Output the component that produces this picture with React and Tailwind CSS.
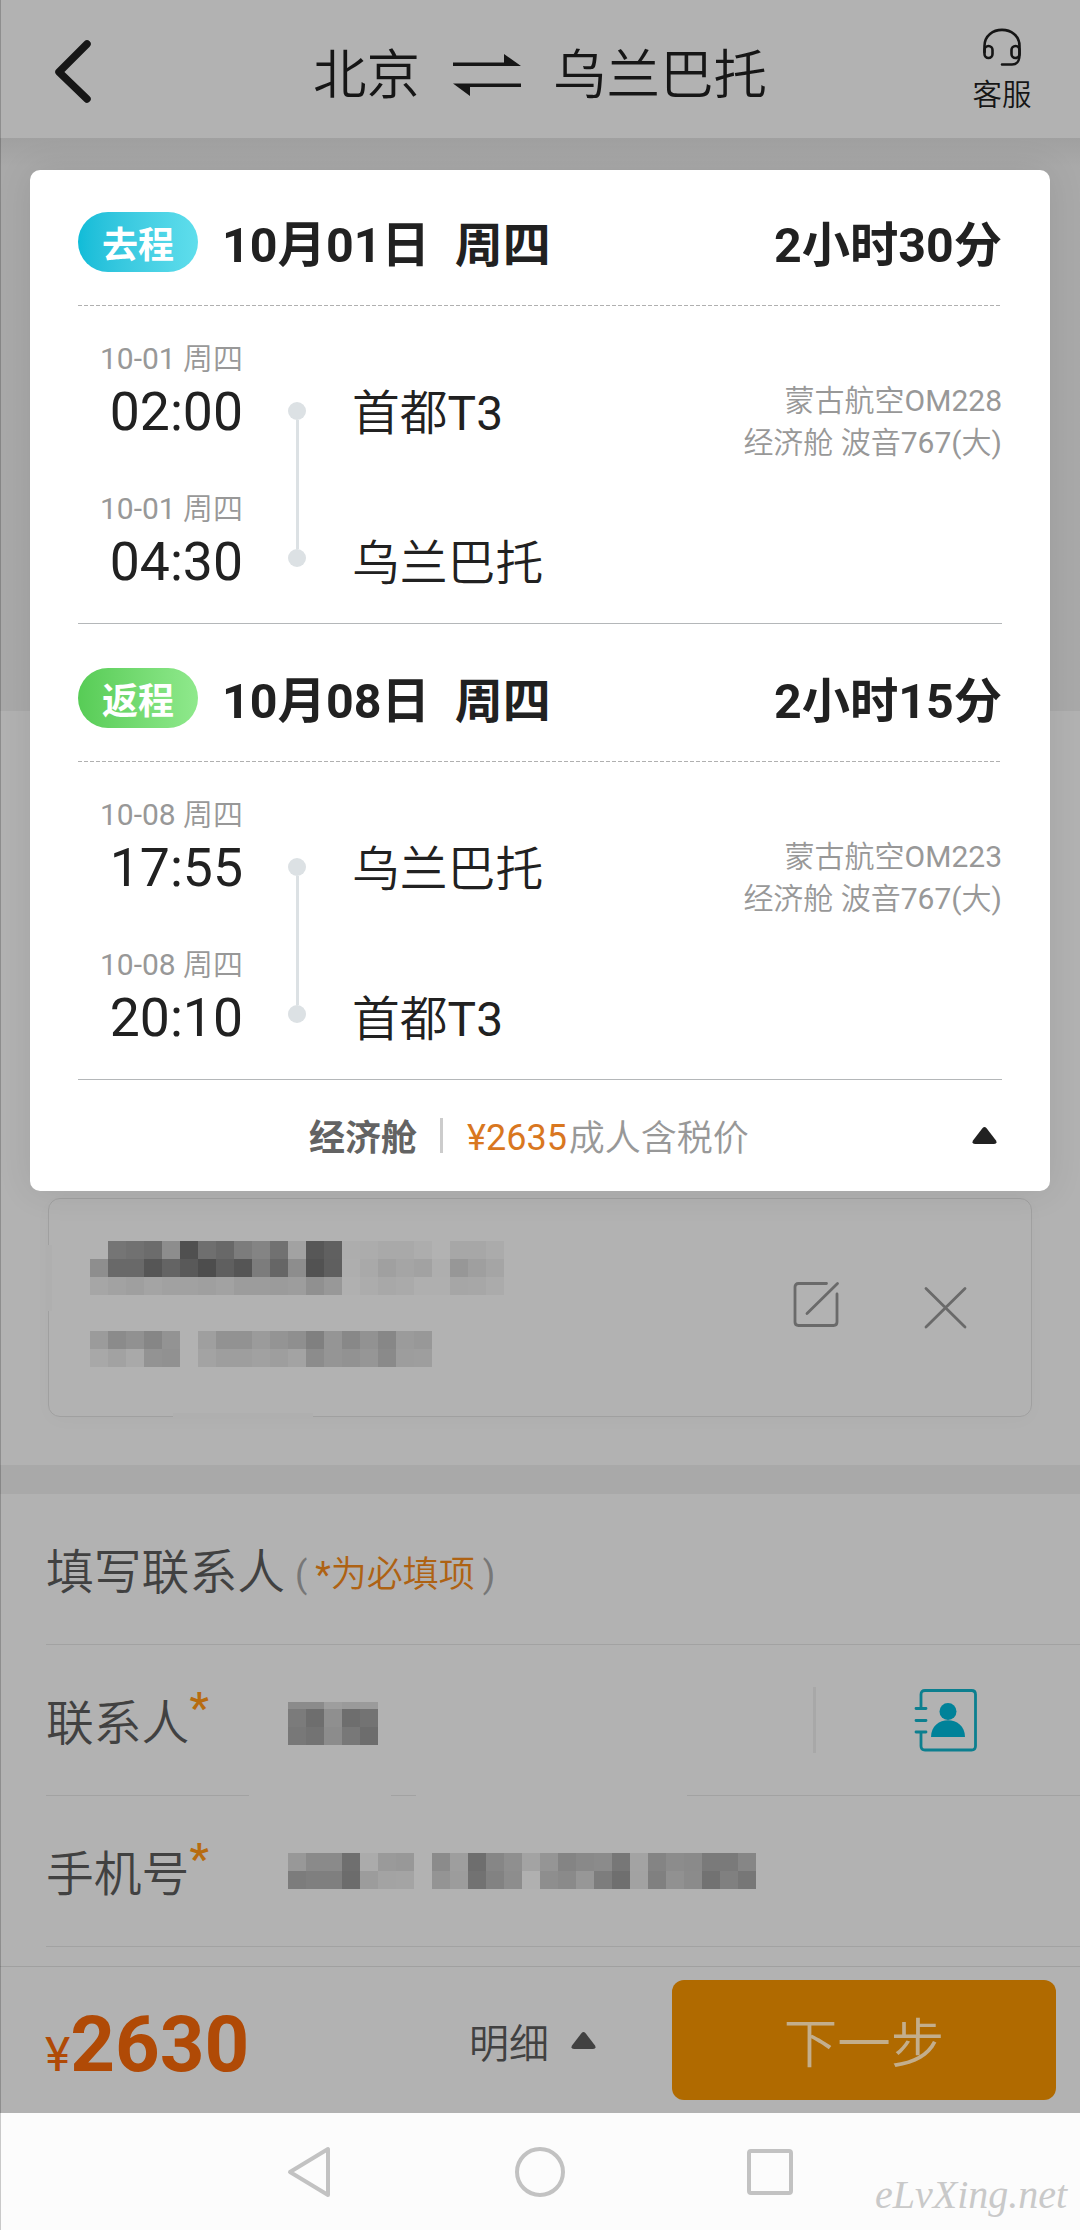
import React from "react";

const FONT = "font-['Roboto','Noto_Sans_CJK_SC',sans-serif]";

const TRIPS = [
  {
    tag: "去程",
    tagStyle: "bg-linear-to-r from-[#0fbcd8] to-[#5fdeec]",
    date: "10月01日",
    duration: "2小时30分",
    flight: "蒙古航空OM228",
    cabin: "经济舱 波音767(大)",
    stops: [
      { day: "10-01 周四", time: "02:00", place: "首都T3" },
      { day: "10-01 周四", time: "04:30", place: "乌兰巴托" },
    ],
  },
  {
    tag: "返程",
    tagStyle: "bg-linear-to-r from-[#57cc56] to-[#8fe98c]",
    date: "10月08日",
    duration: "2小时15分",
    flight: "蒙古航空OM223",
    cabin: "经济舱 波音767(大)",
    stops: [
      { day: "10-08 周四", time: "17:55", place: "乌兰巴托" },
      { day: "10-08 周四", time: "20:10", place: "首都T3" },
    ],
  },
];

// Two hex digits per cell give its grey level; ".." leaves the cell clear.
const NAME_MASK = [
  "..75716c8d50" + "6f687c8471a2" + "5760adaca9a9ad..a7a7ab",
  "8e6969566459" + "4d5f557c668d" + "525faea9a0a5a2ae979fa5",
  "a6a29fa4a1a1" + "9fa29c9c9b9d" + "9098b0aca8aaafafa6a7ab",
];
const ID_MASK = [
  "9b8b918693.." + "9f92929b948f" + "80958892879b98",
  "a8a2a99391.." + "a39e9ea19ea3" + "8c9592968a9d9e",
];
const CONTACT_MASK = ["7b6e8f6e73", "78738c786d"];
const CONTACT_MASK_EDGE = ["8b8b9e9a9b"];
const PHONE_MASK = [
  "988a8a6fab9a98..8b9e6e868fa3" + "9584898b77a3848c8a7a7a86",
  "7c7f7f6c9ca3a4..949c72828db0" + "8e8a977d6fa280918b728077",
];

// Chinese runs are set slightly lighter than the Latin letters and digits beside them.
function Mixed({ children }) {
  return (
    <span className="font-[350]">
      {children.split(/([\x21-\x7e]+)/).map((run, i) =>
        i % 2 ? <span key={i} className="font-normal">{run}</span> : run
      )}
    </span>
  );
}

function Mosaic({ rows, rowClass = "h-[18px]" }) {
  return (
    <div className="flex flex-col">
      {rows.map((row, r) => (
        <div key={r} className={`flex ${rowClass}`}>
          {row.match(/../g).map((v, c) => (
            <span
              key={c}
              className="block w-[18px]"
              style={v === ".." ? undefined : { backgroundColor: `#${v}${v}${v}` }}
            />
          ))}
        </div>
      ))}
    </div>
  );
}

function Triangle({ className }) {
  return (
    <svg width="25" height="17" viewBox="0 0 25 17" className={className} fill="currentColor">
      <path d="M10.6 1Q12.5-.8 14.4 1L24 13.6Q25.6 17 22 17H3Q-.6 17 1 13.6Z" />
    </svg>
  );
}

function Header() {
  return (
    <header className="flex h-[138px] items-start bg-[#b2b2b2] text-[#161616]">
      <svg width="40" height="68" viewBox="0 0 40 68" className="mt-[38px] ml-[53px]" fill="none" stroke="currentColor" strokeWidth="7.5" strokeLinecap="round" strokeLinejoin="round">
        <path d="M34 6L6 34L34 61" />
      </svg>
      <div className="mt-[34px] ml-[220px] flex h-[80px] items-center text-[53.5px] leading-[80px] font-[350]">
        <span className="pt-[4px]">北京</span>
        <svg width="70" height="44" viewBox="0 0 70 44" className="mx-[31.5px] mt-[2px]" fill="currentColor">
          <path d="M1 9.500H52V1L69 13H1ZM69 34H18V43L1 30.500H69Z" />
        </svg>
        <span className="pt-[4px]">乌兰巴托</span>
      </div>
      <div className="mt-[27px] mr-[48px] ml-auto flex w-[60px] flex-col items-center">
        <svg width="42" height="42" viewBox="0 0 42 42" fill="none" stroke="currentColor" strokeWidth="2.6">
          <path d="M3.500 25V19C3.500 -2.500 38.500 -2.500 38.500 19V27C38.500 35 36 37.500 31 37.500H21" strokeLinecap="round" />
          <rect x="3.500" y="19" width="8" height="12" rx="4" />
          <rect x="30.500" y="19" width="8" height="12" rx="4" />
        </svg>
        <span className="mt-[6px] text-[29.5px] leading-[40px] font-[350]">客服</span>
      </div>
    </header>
  );
}

function Trip({ trip }) {
  return (
    <section className="h-[454px] border-b border-[#b4b7b9]">
      <div className="flex h-[135px] items-center justify-between pt-[9px] text-[48px] leading-[64px] font-bold text-[#212121]">
        <div className="flex items-center">
          <span className={`${trip.tagStyle} mr-[24px] flex h-[60px] w-[120px] items-center justify-center rounded-full pt-[8px] text-[36px] leading-[52px] text-white`}>
            {trip.tag}
          </span>
          <span className="pt-[7px] text-[48.4px]">{trip.date}</span>
          <span className="ml-[25px] pt-[7px]">周四</span>
        </div>
        <span className="pt-[7px] text-[48.3px]">{trip.duration}</span>
      </div>
      <div className="mr-[2px] h-px bg-[repeating-linear-gradient(90deg,#b0b0b0_0_4px,transparent_4px_6px)]" />
      <div className="flex pt-[33px]">
        <div className="flex w-[165px] flex-col text-right">
          {trip.stops.map((s) => (
            <div key={s.time} className="h-[150px]">
              <div className="text-[30px] leading-[40px] text-[#989898]"><Mixed>{s.day}</Mixed></div>
              <div className="mt-px text-[53.5px] leading-[64px] text-[#212121]">{s.time}</div>
            </div>
          ))}
        </div>
        <div className="mt-[63px] ml-[45px] flex w-[18px] flex-col items-center">
          <i className="block size-[18px] rounded-full bg-[#dce1e4]" />
          <i className="block h-[129px] w-[3px] bg-[#dce1e4]" />
          <i className="block size-[18px] rounded-full bg-[#dce1e4]" />
        </div>
        <div className="ml-[46px] pt-[43px] text-[47.8px] leading-[64px] text-[#212121]">
          {trip.stops.map((s) => (
            <div key={s.time} className="h-[150px]"><Mixed>{s.place}</Mixed></div>
          ))}
        </div>
        <div className="ml-auto pt-[41px] text-right text-[30px] leading-[42px] text-[#989898]">
          <div><Mixed>{trip.flight}</Mixed></div>
          <div><Mixed>{trip.cabin}</Mixed></div>
        </div>
      </div>
    </section>
  );
}

function TripCard() {
  return (
    <div className="absolute top-[170px] left-[30px] flex h-[1021px] w-[1020px] flex-col rounded-[10px] bg-white px-[48px] shadow-[0_0_36px_rgba(0,0,0,0.09)]">
      <div className="flex flex-col gap-[2px]">
        {TRIPS.map((t) => (
          <Trip key={t.tag} trip={t} />
        ))}
      </div>
      <div className="flex h-[111px] items-center text-[36px] leading-[48px]">
        <span className="ml-[231px] pt-[6px] font-bold text-[#636363]">经济舱</span>
        <i className="mr-[24px] ml-[23px] block h-[35px] w-[3px] bg-[#cccccc]" />
        <span className="pt-[4px] text-[#d9771f]">¥2635</span>
        <span className="ml-[2px] pt-[6px] font-[350] text-[#989898]">成人含税价</span>
        <Triangle className="mr-[5px] ml-auto text-[#212121]" />
      </div>
    </div>
  );
}

function PassengerCard() {
  return (
    <div className="relative mx-[48px] flex h-[219px] rounded-[12px] border-[1.5px] border-[#a0a0a0] pl-[41px] shadow-[0_4px_20px_rgba(0,0,0,0.02)]">
      <i className="absolute top-[46px] -left-[3px] block h-[66px] w-[6px] bg-[#afafaf]" />
      <i className="absolute -bottom-[3px] left-[124px] block h-[6px] w-[140px] bg-[#afafaf]" />
      <div className="flex flex-col gap-[36px] pt-[42px]">
        <Mosaic rows={NAME_MASK} />
        <Mosaic rows={ID_MASK} />
      </div>
      <div className="mt-[82px] mr-[63px] ml-auto flex items-start gap-[84px] text-[#6a6a6a]">
        <svg width="48" height="48" viewBox="0 0 48 48" fill="none" stroke="currentColor" strokeWidth="2.8" strokeLinecap="round">
          <path d="M34.500 2.500H6.500Q3 2.500 3 6V41Q3 44.500 6.500 44.500H41.500Q45 44.500 45 41V13M45.500 2.500L15 32.500" />
        </svg>
        <svg width="44" height="44" viewBox="0 0 44 44" className="mt-[5px]" fill="none" stroke="currentColor" strokeWidth="2.8" strokeLinecap="round">
          <path d="M2 2.500L41 41M41 2.500L2 41" />
        </svg>
      </div>
    </div>
  );
}

function Field({ label, rule, children }) {
  return (
    <div className="ml-[46px] flex h-[151px] flex-col text-[47.8px] leading-[64px]">
      <div className="flex h-[150px] items-center">
        <div className="flex w-[242px] items-start">
          <span className="pt-[8px] font-[350]">{label}</span>
          <span className="-mt-px text-[43px] leading-[48px] font-semibold text-[#b76c10]">*</span>
        </div>
        {children}
      </div>
      <div className={`h-px ${rule}`} />
    </div>
  );
}

function ContactForm() {
  return (
    <section className="h-[472px] text-[#414141]">
      <div className="ml-[46px] flex h-[151px] items-center border-b border-[#a2a2a2]">
        <span className="pt-[7px] text-[47.8px] leading-[64px] font-[350]">填写联系人</span>
        <span className="mt-[12px] ml-[10px] flex text-[36px] leading-[48px] text-[#777777]">
          <span>(</span>
          <span className="mx-[8px] text-[#ae6213]"><Mixed>*为必填项</Mixed></span>
          <span>)</span>
        </span>
      </div>
      <Field
        label="联系人"
        rule="bg-[linear-gradient(90deg,#a2a2a2_203px,transparent_203px_345px,#a2a2a2_345px_370px,transparent_370px_641px,#a2a2a2_641px)]"
      >
        <div className="mt-[7px]">
          <Mosaic rows={CONTACT_MASK_EDGE} rowClass="h-[7px]" />
          <Mosaic rows={CONTACT_MASK} />
        </div>
        <i className="ml-[435px] block h-[66px] w-[3px] bg-[#a8a8a8]" />
        <svg width="64" height="64" viewBox="0 0 64 64" className="ml-[98px] text-[#0c7f8f]" fill="none" stroke="currentColor" strokeWidth="2.8" strokeLinecap="round">
          <path d="M7 20V6.500Q7 2.500 11 2.500H57.500Q61.500 2.500 61.500 6.500V58Q61.500 62 57.500 62H11Q7 62 7 58V44M2 20.500H12M2 32.500H12M2 44H12" />
          <circle cx="34" cy="23.500" r="8.500" fill="#008299" stroke="none" />
          <path d="M17 49C17 26.500 51 26.500 51 49Z" fill="#008299" stroke="none" />
        </svg>
      </Field>
      <Field label="手机号" rule="bg-[#a2a2a2]">
        <Mosaic rows={PHONE_MASK} />
      </Field>
    </section>
  );
}

function BottomBar() {
  return (
    <div className="flex h-[147px] border-t border-[#a0a0a0]">
      <div className="flex w-[426px] items-baseline pt-[26px] pl-[45px] text-[#b04a06]">
        <span className="text-[48px] leading-[90px]">¥</span>
        <span className="text-[78px] leading-[104px] font-bold">2630</span>
      </div>
      <div className="ml-[43px] flex w-[203px] items-center text-[40px] leading-[56px] text-[#414141]">
        <span className="pt-[9px] font-[350]">明细</span>
        <Triangle className="ml-[22px]" />
      </div>
      <button className="mt-[13px] h-[120px] w-[384px] rounded-[12px] bg-[#b06a00] pt-[10px] text-[53.5px] leading-[72px] font-[350] text-[#c3ae8c]">下一步</button>
    </div>
  );
}

function SystemNav() {
  return (
    <nav className="flex h-[117px] items-start bg-[#fcfcfc] text-[#c2c2c2]">
      <svg width="46" height="54" viewBox="0 0 46 54" className="mt-[32px] ml-[286px]" fill="none" stroke="currentColor" strokeWidth="4" strokeLinejoin="round">
        <path d="M42 4V50L4 27Z" />
      </svg>
      <i className="mt-[34px] ml-[183px] block size-[50px] rounded-full border-4 border-[#c2c2c2]" />
      <i className="mt-[36px] ml-[182px] block size-[46px] rounded-[4px] border-4 border-[#c2c2c2]" />
      <span className="mt-[60px] ml-[82px] font-['Liberation_Serif',cursive] text-[40px] leading-[44px] whitespace-nowrap text-[#c9c9c9] italic">eLvXing.net</span>
    </nav>
  );
}

export default function App() {
  return (
    <div lang="zh-CN" className={`${FONT} relative flex h-[2230px] w-[1080px] flex-col overflow-hidden bg-[#b2b2b2]`}>
      <div className="flex h-[2113px] flex-col">
        <Header />
        <div className="h-[573px] bg-linear-to-b from-[#a0a0a0] via-[#a9a9a9] via-5% to-[#a9a9a9]" />
        <div className="h-[487px]" />
        <PassengerCard />
        <div className="mt-[48px] h-[29px] bg-[#a9a9a9]" />
        <ContactForm />
        <BottomBar />
      </div>
      <SystemNav />
      <TripCard />
      <i className="absolute inset-y-0 left-0 block w-px bg-black/20" />
    </div>
  );
}
